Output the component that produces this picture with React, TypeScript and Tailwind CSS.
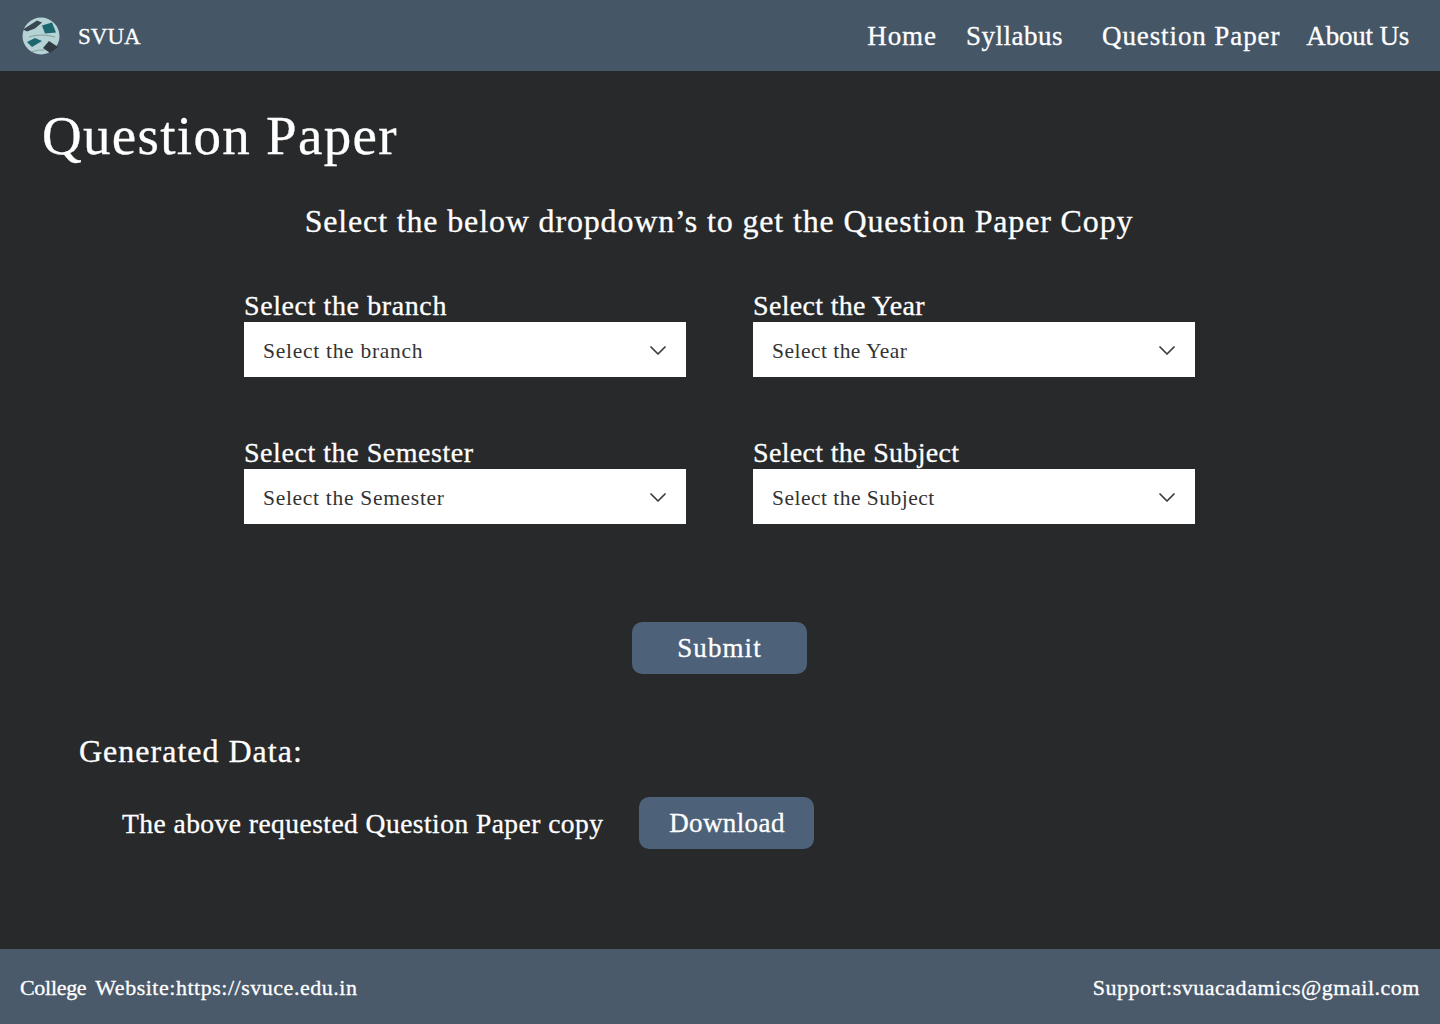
import { ChevronDown } from "lucide-react"

const serif = "font-['Liberation_Serif',serif]"

const Logo = () => (
	<svg width="40" height="40" viewBox="0 0 40 40" className="shrink-0">
		<circle cx="20" cy="20" r="18.5" fill="#b5d3d4" />
		<path d="M2 13.5 L16 4.5 L21 6.5 L14 12.5 L6 15.5 Z" fill="#3a4552" />
		<path d="M21 9.5 L31 6.5 L35 16.5 L24 17.5 Z" fill="#1c6670" />
		<path d="M6 26 L14 22 L21 25 L11 31 Z" fill="#1c6670" />
		<path d="M22 32 L28 25 L37 31 L29 37 Z" fill="#2f3a42" />
		<path d="M8 21 Q20 17 34 21 M10 36 Q18 33 24 34" stroke="#70888c" strokeWidth="0.7" fill="none" />
	</svg>
)

function Field({ label, labelClass, valueClass }: { label: string; labelClass: string; valueClass: string }) {
	return (
		<div>
			<div className={`text-[28px] leading-[32px] h-[32px] text-white ${labelClass}`}>{label}</div>
			<div className="flex items-center justify-between bg-white h-[55px] pl-[19px] pr-[14px] pt-[3px] text-[#333] text-[21.5px] [-webkit-text-stroke:0px]">
				<span className={valueClass}>{label}</span>
				<ChevronDown size={28} strokeWidth={1.5} className="text-[#3c3c3c] -translate-y-[0.5px]" />
			</div>
		</div>
	)
}

export default function App() {
	return (
		<div className={`${serif} flex flex-col min-h-[1024px] bg-[#27292b] text-white [-webkit-text-stroke:0.3px]`}>
			{/* Navbar */}
			<header className="flex items-center justify-between h-[71px] bg-[#455667] pl-[21px] pr-[31px]">
				<div className="flex items-center gap-[17px]">
					<Logo />
					<span className="text-[23px] pt-[3px]">SVUA</span>
				</div>
				<nav className="flex text-[27px] pt-[2px]">
					<a className="mr-[29px] tracking-[0.95px]">Home</a>
					<a className="mr-[39px] tracking-[0.5px]">Syllabus</a>
					<a className="mr-[26px] tracking-[0.9px]">Question Paper</a>
					<a className="tracking-[-0.2px]">About Us</a>
				</nav>
			</header>

			{/* Main */}
			<main className="flex-1 pt-[32px]">
				<h1 className="pl-[42px] text-[55px] leading-[66px] tracking-[1.3px]">Question Paper</h1>
				<h2 className="mt-[30px] text-center pr-[2px] text-[32px] leading-[44px] tracking-[0.85px]">
					Select the below dropdown’s to get the Question Paper Copy
				</h2>

				<div className="mt-[47px] ml-[244px] grid grid-cols-[442px_442px] gap-x-[67px] gap-y-[60px] w-fit">
					<Field label="Select the branch" labelClass="tracking-[0.6px]" valueClass="tracking-[0.72px]" />
					<Field label="Select the Year" labelClass="tracking-[0.32px]" valueClass="tracking-[0.47px]" />
					<Field label="Select the Semester" labelClass="tracking-[0.55px]" valueClass="tracking-[0.7px]" />
					<Field label="Select the Subject" labelClass="tracking-[0.32px]" valueClass="tracking-[0.48px]" />
				</div>

				<div className="mt-[98px] flex justify-center">
					<button className="mr-[1px] w-[175px] h-[52px] rounded-[10px] bg-[#4d6179] text-[27px] tracking-[1.1px]">Submit</button>
				</div>

				<h3 className="mt-[55px] pl-[79px] text-[32px] leading-[44px] tracking-[1px]">Generated Data:</h3>

				<div className="mt-[24px] pl-[122px] flex items-center gap-[36px]">
					<span className="text-[27.5px] tracking-[0.46px] pt-[1px]">The above requested Question Paper copy</span>
					<button className="w-[175px] h-[52px] rounded-[10px] bg-[#4d6179] text-[27px] tracking-[0.4px]">Download</button>
				</div>
			</main>

			{/* Footer */}
			<footer className="flex items-center justify-between h-[75px] pt-[1px] bg-[#4a5a6b] px-[20px] text-[22px] tracking-[0.52px]">
				<span>
					<span className="mr-[9px] tracking-[-0.3px]">College</span>
					Website:https://svuce.edu.in
				</span>
				<span>Support:svuacadamics@gmail.com</span>
			</footer>
		</div>
	)
}
